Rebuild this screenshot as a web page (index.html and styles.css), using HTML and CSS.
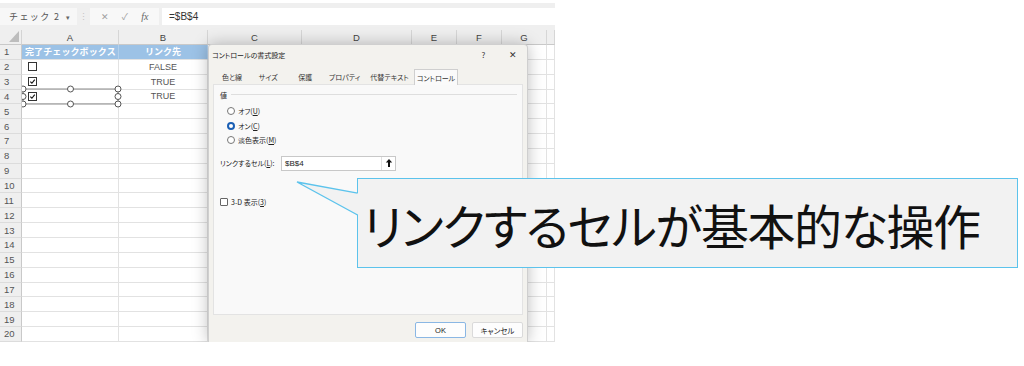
FILE: index.html
```html
<!DOCTYPE html>
<html lang="ja">
<head>
<meta charset="utf-8">
<title>コントロールの書式設定</title>
<link rel="stylesheet" href="styles.css">
</head>
<body>
<div class="page">
  <div class="app">
    <div class="toolbar">
      <div class="namebox"><span>チェック 2</span><span class="dd">▾</span></div>
      <div class="sep">⋮</div>
      <div class="fbtns"><span>✕</span><span>✓</span><span class="fx">fx</span></div>
      <div class="formula">=$B$4</div>
    </div>
    <div class="sheet">
      <div class="corner"><span class="tri"></span></div><div class="ch">A</div><div class="ch">B</div><div class="ch">C</div><div class="ch">D</div><div class="ch">E</div><div class="ch">F</div><div class="ch">G</div><div class="ch"></div>
      <div class="rh">1</div><div class="c hd left">完了チェックボックス</div><div class="c hd center">リンク先</div><div class="c"></div><div class="c"></div><div class="c"></div><div class="c"></div><div class="c"></div><div class="c"></div>
      <div class="rh">2</div><div class="c"><span class="cb"></span></div><div class="c val">FALSE</div><div class="c"></div><div class="c"></div><div class="c"></div><div class="c"></div><div class="c"></div><div class="c"></div>
      <div class="rh">3</div><div class="c"><span class="cb"><svg viewBox="0 0 8 8" class="tick"><path d="M1.5 4.2 L3.3 6 L6.6 1.8"/></svg></span></div><div class="c val">TRUE</div><div class="c"></div><div class="c"></div><div class="c"></div><div class="c"></div><div class="c"></div><div class="c"></div>
      <div class="rh">4</div><div class="c"><span class="cb"><svg viewBox="0 0 8 8" class="tick"><path d="M1.5 4.2 L3.3 6 L6.6 1.8"/></svg></span></div><div class="c val">TRUE</div><div class="c"></div><div class="c"></div><div class="c"></div><div class="c"></div><div class="c"></div><div class="c"></div>
      <div class="rh">5</div><div class="c"></div><div class="c"></div><div class="c"></div><div class="c"></div><div class="c"></div><div class="c"></div><div class="c"></div><div class="c"></div>
      <div class="rh">6</div><div class="c"></div><div class="c"></div><div class="c"></div><div class="c"></div><div class="c"></div><div class="c"></div><div class="c"></div><div class="c"></div>
      <div class="rh">7</div><div class="c"></div><div class="c"></div><div class="c"></div><div class="c"></div><div class="c"></div><div class="c"></div><div class="c"></div><div class="c"></div>
      <div class="rh">8</div><div class="c"></div><div class="c"></div><div class="c"></div><div class="c"></div><div class="c"></div><div class="c"></div><div class="c"></div><div class="c"></div>
      <div class="rh">9</div><div class="c"></div><div class="c"></div><div class="c"></div><div class="c"></div><div class="c"></div><div class="c"></div><div class="c"></div><div class="c"></div>
      <div class="rh">10</div><div class="c"></div><div class="c"></div><div class="c"></div><div class="c"></div><div class="c"></div><div class="c"></div><div class="c"></div><div class="c"></div>
      <div class="rh">11</div><div class="c"></div><div class="c"></div><div class="c"></div><div class="c"></div><div class="c"></div><div class="c"></div><div class="c"></div><div class="c"></div>
      <div class="rh">12</div><div class="c"></div><div class="c"></div><div class="c"></div><div class="c"></div><div class="c"></div><div class="c"></div><div class="c"></div><div class="c"></div>
      <div class="rh">13</div><div class="c"></div><div class="c"></div><div class="c"></div><div class="c"></div><div class="c"></div><div class="c"></div><div class="c"></div><div class="c"></div>
      <div class="rh">14</div><div class="c"></div><div class="c"></div><div class="c"></div><div class="c"></div><div class="c"></div><div class="c"></div><div class="c"></div><div class="c"></div>
      <div class="rh">15</div><div class="c"></div><div class="c"></div><div class="c"></div><div class="c"></div><div class="c"></div><div class="c"></div><div class="c"></div><div class="c"></div>
      <div class="rh">16</div><div class="c"></div><div class="c"></div><div class="c"></div><div class="c"></div><div class="c"></div><div class="c"></div><div class="c"></div><div class="c"></div>
      <div class="rh">17</div><div class="c"></div><div class="c"></div><div class="c"></div><div class="c"></div><div class="c"></div><div class="c"></div><div class="c"></div><div class="c"></div>
      <div class="rh">18</div><div class="c"></div><div class="c"></div><div class="c"></div><div class="c"></div><div class="c"></div><div class="c"></div><div class="c"></div><div class="c"></div>
      <div class="rh">19</div><div class="c"></div><div class="c"></div><div class="c"></div><div class="c"></div><div class="c"></div><div class="c"></div><div class="c"></div><div class="c"></div>
      <div class="rh">20</div><div class="c"></div><div class="c"></div><div class="c"></div><div class="c"></div><div class="c"></div><div class="c"></div><div class="c"></div><div class="c"></div>
    </div>

    <svg class="selection" width="100" height="24" viewBox="0 0 100 24">
      <rect x="1" y="4" width="95" height="15" fill="none" stroke="#8a8a8a" stroke-width="1"/>
      <g fill="#fff" stroke="#555" stroke-width="1">
        <circle cx="1" cy="4" r="3"/><circle cx="48.5" cy="4" r="3"/><circle cx="96" cy="4" r="3"/>
        <circle cx="1" cy="11.5" r="3"/><circle cx="96" cy="11.5" r="3"/>
        <circle cx="1" cy="19" r="3"/><circle cx="48.5" cy="19" r="3"/><circle cx="96" cy="19" r="3"/>
      </g>
    </svg>

    <div class="dialog">
      <div class="dtitle">
        <span class="dt">コントロールの書式設定</span>
        <span class="help">?</span>
        <span class="close">✕</span>
      </div>
      <div class="tabs">
        <span class="tab t1">色と線</span>
        <span class="tab t2">サイズ</span>
        <span class="tab t3">保護</span>
        <span class="tab t4">プロパティ</span>
        <span class="tab t5">代替テキスト</span>
        <span class="tab t6 active">コントロール</span>
      </div>
      <div class="panel">
        <div class="legend"><span>値</span><span class="rule"></span></div>
        <div class="radios">
          <div class="radio"><span class="rb"></span><span>オフ(<u>U</u>)</span></div>
          <div class="radio"><span class="rb on"></span><span>オン(<u>C</u>)</span></div>
          <div class="radio"><span class="rb"></span><span>淡色表示(<u>M</u>)</span></div>
        </div>
        <div class="linkrow">
          <span class="lbl">リンクするセル(<u>L</u>):</span>
          <div class="input"><span class="iv">$B$4</span><span class="ibtn"><svg viewBox="0 0 8 10" width="8" height="10"><path d="M4 1 L7.2 4.6 L5 4.6 L5 9 L3 9 L3 4.6 L0.8 4.6 Z" fill="#111"/></svg></span></div>
        </div>
        <div class="chk3d"><span class="box"></span><span>3-D 表示(<u>3</u>)</span></div>
      </div>
      <div class="footer">
        <span class="btn ok">OK</span>
        <span class="btn">キャンセル</span>
      </div>
    </div>
  </div>

  <div class="callout"><span class="ctext">リンクするセルが基本的な操作</span></div>
  <svg class="tail" width="64" height="36" viewBox="0 0 64 36">
    <polygon points="1,1 62.6,12.3 62.6,34.2" fill="#f2f2f2"/>
    <polyline points="61.6,12.1 1,1 61.6,34" fill="none" stroke="#5cc3ec" stroke-width="1.4" stroke-linejoin="miter"/>
  </svg>
</div>
</body>
</html>
```

FILE: styles.css
```css
* { box-sizing: border-box; margin: 0; padding: 0; }

body {
  background: #fff;
  width: 1024px;
  height: 366px;
  overflow: hidden;
  font-family: "Noto Sans CJK JP", "Liberation Sans", sans-serif;
}

.page {
  position: relative;
  width: 1024px;
  height: 366px;
}

.app {
  position: relative;
  width: 555px;
  height: 342px;
  overflow: hidden;
  background: #fff;
}

/* ---------- formula toolbar ---------- */
.toolbar {
  margin-top: 3px;
  height: 27px;
  padding: 5px 0;
  background: #efefef;
  display: flex;
  align-items: center;
}

.namebox {
  width: 77px;
  height: 17px;
  background: #f7f7f7;
  display: flex;
  align-items: center;
  justify-content: space-between;
  padding: 0 7px 0 9px;
  font-size: 9px;
  letter-spacing: 1.4px;
  color: #555;
}

.dd { font-size: 7px; color: #666; letter-spacing: 0; }

.sep {
  width: 13px;
  text-align: center;
  color: #c4c4c4;
  font-size: 9px;
}

.fbtns {
  width: 69px;
  height: 17px;
  background: #f8f8f8;
  display: flex;
  align-items: center;
  justify-content: space-around;
  padding: 0 4px;
  color: #a0a0a0;
  font-size: 9px;
}

.fx {
  font-family: "Liberation Serif", serif;
  font-style: italic;
  font-size: 10px;
  color: #666;
}

.formula {
  flex: 1;
  height: 17px;
  margin-left: 3px;
  padding-left: 7px;
  background: #fff;
  display: flex;
  align-items: center;
  font-family: "Liberation Sans", sans-serif;
  font-size: 10px;
  color: #333;
}

/* ---------- sheet ---------- */
.sheet {
  display: grid;
  grid-template-columns: 22px 97px 89px 94px 110px 45px 45px 45px 8px;
  grid-template-rows: 15px repeat(20, 14.85px);
}

.corner {
  background: #efefef;
  border-right: 1px solid #d4d4d4;
  border-bottom: 1px solid #c9c9c9;
  position: relative;
}

.tri {
  position: absolute;
  right: 2px;
  bottom: 2px;
  width: 0;
  height: 0;
  border-left: 10px solid transparent;
  border-bottom: 11px solid #bdbdbd;
}

.ch {
  background: #efefef;
  border-right: 1px solid #d6d6d6;
  border-bottom: 1px solid #c9c9c9;
  display: flex;
  align-items: center;
  justify-content: center;
  font-family: "Liberation Sans", sans-serif;
  font-size: 9.5px;
  color: #444;
}

.rh {
  background: #efefef;
  border-right: 1px solid #c9c9c9;
  border-bottom: 1px solid #dcdcdc;
  display: flex;
  align-items: center;
  padding-left: 4px;
  font-family: "Liberation Sans", sans-serif;
  font-size: 9.5px;
  color: #555;
}

.c {
  border-right: 1px solid #e2e2e2;
  border-bottom: 1px solid #e2e2e2;
  display: flex;
  align-items: center;
  min-width: 0;
  overflow: hidden;
  white-space: nowrap;
}

.hd {
  background: #9cc2e6;
  color: #fff;
  font-weight: bold;
  font-size: 9px;
  border-right-color: #b3d0ec;
}

.left { padding-left: 3px; letter-spacing: 0.1px; }
.center { justify-content: center; }

.val {
  justify-content: center;
  font-family: "Liberation Sans", sans-serif;
  font-size: 9px;
  color: #555;
}

.cb {
  width: 9px;
  height: 9px;
  margin-left: 6px;
  border: 1px solid #333;
  background: #fff;
  display: flex;
}

.tick {
  width: 7px;
  height: 7px;
  fill: none;
  stroke: #111;
  stroke-width: 1.3;
}

.selection {
  position: absolute;
  left: 22px;
  top: 85px;
}

/* ---------- dialog ---------- */
.dialog {
  position: absolute;
  left: 208px;
  top: 44px;
  width: 320px;
  height: 298px;
  background: #f3f2ee;
  border: 1px solid #cfcfcf;
  border-bottom: none;
  border-radius: 4px 4px 0 0;
  box-shadow: 0 0 16px rgba(0, 0, 0, 0.26);
  display: flex;
  flex-direction: column;
  font-size: 7px;
  font-feature-settings: "palt";
  color: #222;
}

.dtitle {
  height: 19px;
  display: flex;
  align-items: center;
  padding-left: 3px;
  font-size: 7px;
}

.dt { flex: 1; }

.help, .close {
  width: 29px;
  text-align: center;
  color: #333;
}

.help { font-size: 8px; }
.close { font-size: 9px; }

.tabs {
  margin-top: 5px;
  padding-left: 5px;
  height: 15px;
  display: flex;
  align-items: stretch;
}

.tab {
  display: flex;
  align-items: center;
  justify-content: center;
  color: #333;
}

.t1 { width: 36px; }
.t2 { width: 36.5px; }
.t3 { width: 37.5px; }
.t4 { width: 41px; }
.t5 { width: 49px; }
.t6 { width: 44px; }

.tab.active {
  background: #fafafa;
  border: 1px solid #cfcfcf;
  border-bottom: none;
  position: relative;
  z-index: 1;
  margin-bottom: -1px;
}

.panel {
  flex: 1;
  margin: 0 4px;
  background: #f9f9f9;
  border: 1px solid #e3e3e3;
  padding: 4px 5px 0 6px;
  display: flex;
  flex-direction: column;
}

.legend {
  height: 11px;
  display: flex;
  align-items: center;
  gap: 4px;
}

.rule {
  flex: 1;
  height: 1px;
  background: #dedede;
}

.radios {
  margin-top: 4px;
  padding-left: 7px;
  display: flex;
  flex-direction: column;
}

.radio {
  height: 14.5px;
  display: flex;
  align-items: center;
  gap: 3px;
}

.rb {
  width: 8px;
  height: 8px;
  border-radius: 50%;
  border: 1px solid #777;
  background: #fff;
}

.rb.on {
  border: 2.5px solid #1a5fb4;
}

.linkrow {
  margin-top: 8px;
  height: 15px;
  display: flex;
  align-items: center;
}

.lbl { width: 61px; }

.input {
  width: 115px;
  height: 15px;
  background: #fff;
  border: 1px solid #c8c8c8;
  display: flex;
  align-items: center;
}

.iv {
  flex: 1;
  padding-left: 3px;
  font-family: "Liberation Sans", sans-serif;
  font-size: 8px;
  color: #222;
}

.ibtn {
  width: 14px;
  height: 13px;
  border-left: 1px solid #e0e0e0;
  display: flex;
  align-items: center;
  justify-content: center;
}

.chk3d {
  margin-top: 25px;
  height: 12px;
  display: flex;
  align-items: center;
  gap: 3px;
}

.box {
  width: 8px;
  height: 8px;
  border: 1px solid #666;
  border-radius: 1px;
  background: #fff;
}

.footer {
  height: 27px;
  padding: 7px 4px 0 0;
  display: flex;
  justify-content: flex-end;
  gap: 6px;
}

.btn {
  width: 51px;
  height: 16px;
  background: #fdfdfd;
  border: 1px solid #dadada;
  border-radius: 2px;
  display: flex;
  align-items: center;
  justify-content: center;
  font-size: 7.5px;
  color: #222;
}

.btn.ok {
  border-color: #8ab7e4;
  font-family: "Liberation Sans", sans-serif;
}

/* ---------- callout ---------- */
.callout {
  position: absolute;
  left: 357px;
  top: 178px;
  width: 661px;
  height: 90px;
  background: #f2f2f2;
  border: 1.5px solid #5cc3ec;
  display: flex;
  align-items: center;
  padding-left: 5px;
}

.ctext {
  font-family: "Noto Sans CJK JP", sans-serif;
  font-feature-settings: "palt";
  font-size: 48px;
  letter-spacing: -1.4px;
  line-height: 1;
  color: #111;
  white-space: nowrap;
  margin-top: 2px;
}

.tail {
  position: absolute;
  left: 296px;
  top: 181px;
}
```
